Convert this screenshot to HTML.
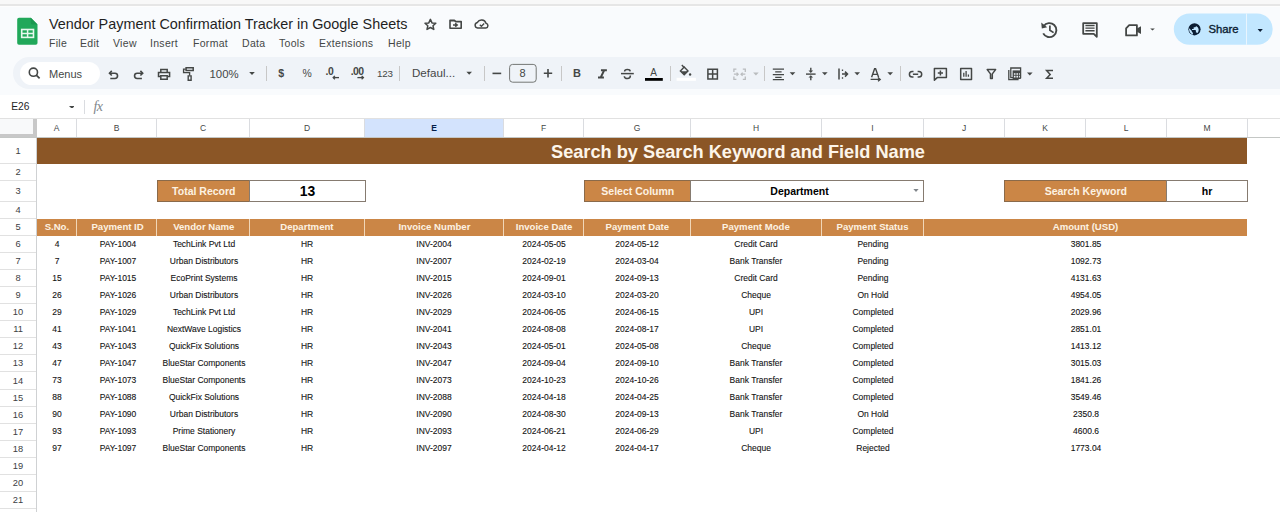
<!DOCTYPE html>
<html><head><meta charset="utf-8">
<style>
*{margin:0;padding:0;box-sizing:border-box}
html,body{width:1280px;height:512px;overflow:hidden;background:#fff;font-family:"Liberation Sans",sans-serif}
.a{position:absolute}
#top{position:absolute;left:0;top:0;width:1280px;height:118px;background:#f9fbfd}
#strip{position:absolute;left:0;top:0;width:1280px;height:6px;background:#f8f8f8;border-bottom:2px solid #e6e6e6}
#strip2{position:absolute;left:0;top:6px;width:1280px;height:1px;background:#fdfdfd}
.title{position:absolute;left:49px;top:16.3px;font-size:14.4px;color:#1f1f1f;white-space:nowrap;letter-spacing:0}
.menu{position:absolute;top:37.2px;font-size:10.5px;color:#444746;white-space:nowrap;letter-spacing:0.3px}
#tb{position:absolute;left:13px;top:57px;width:1300px;height:32px;background:#eff3f8;border-radius:16px}
#srch{position:absolute;left:20px;top:62px;width:80px;height:23px;background:#fff;border-radius:12px}
.ti{position:absolute;color:#444746;font-size:11px;white-space:nowrap}
.sep{position:absolute;top:65px;width:1px;height:17px;background:#c7c7c7}
#namebar{position:absolute;left:0;top:95px;width:1280px;height:23px;background:#fff}
.cell{position:absolute;white-space:nowrap;text-align:center;overflow:visible}
.colh{position:absolute;top:118px;height:20px;border-right:1px solid #e1e1e1;border-top:1px solid #e1e1e1;border-bottom:1px solid #c4c7c5;font-size:8.5px;color:#444746;text-align:center;line-height:19px;background:#fff}
.rowh{position:absolute;left:0;width:36px;border-bottom:1px solid #e1e1e1;border-right:1px solid #c4c7c5;font-size:8.5px;color:#444746;text-align:center;background:#fff}
.d{position:absolute;font-size:9.7px;color:#111;-webkit-text-stroke:0.12px #222;white-space:nowrap;transform:translateX(-50%) scaleX(0.875)}
.h{position:absolute;font-size:9.6px;color:#fdf2e2;font-weight:bold;white-space:nowrap;transform:translateX(-50%)}
</style></head><body>
<div id="top"></div>
<div id="strip"></div><div id="strip2"></div>

<!-- sheets logo -->
<svg class="a" style="left:0;top:0" width="50" height="50" viewBox="0 0 50 50">
  <path d="M19 17.8H30.8L37.5 24.5V43a1.8 1.8 0 0 1 -1.8 1.8H19a1.8 1.8 0 0 1 -1.8 -1.8V19.6a1.8 1.8 0 0 1 1.8 -1.8z" fill="#21a85a"/>
  <path d="M30.8 17.8L37.5 24.5H32.4a1.6 1.6 0 0 1 -1.6 -1.6z" fill="#1a9850"/>
  <rect x="21.7" y="29.5" width="11.8" height="7.9" fill="none" stroke="#e8f7ee" stroke-width="1.6"/>
  <path d="M21.7 33.45H33.5M27.6 29.5V37.4" stroke="#e8f7ee" stroke-width="1.5"/>
</svg>
<div class="title">Vendor Payment Confirmation Tracker in Google Sheets</div>
<div class="menu" style="left:49px">File</div>
<div class="menu" style="left:80px">Edit</div>
<div class="menu" style="left:113px">View</div>
<div class="menu" style="left:150px">Insert</div>
<div class="menu" style="left:193px">Format</div>
<div class="menu" style="left:242px">Data</div>
<div class="menu" style="left:279px">Tools</div>
<div class="menu" style="left:319px">Extensions</div>
<div class="menu" style="left:388px">Help</div>

<!-- title icons -->
<svg class="a" style="left:400px;top:0" width="100" height="50" viewBox="400 0 100 50">
<path d="M430.4 19.4L432.0 22.9L435.8 23.3L433.0 25.8L433.8 29.4L430.4 27.5L427.0 29.4L427.8 25.8L425.0 23.3L428.8 22.9Z" fill="none" stroke="#444746" stroke-width="1.5" stroke-linejoin="round"/>
<path d="M450 20.2H454.4L455.8 21.6H461.2V28.2H450Z" fill="none" stroke="#444746" stroke-width="1.6" stroke-linejoin="round"/>
<path d="M450 20.2H454.4L455.8 21.6H450Z" fill="#444746"/>
<path d="M453 24.9H456.6M455.2 23.2L457.2 24.9L455.2 26.6" fill="none" stroke="#444746" stroke-width="1.5"/>
<path d="M477.6 28.1A2.9 2.9 0 0 1 477.4 22.4A4.7 4.7 0 0 1 486 23.2A2.5 2.5 0 0 1 485.8 28.1Z" fill="none" stroke="#444746" stroke-width="1.5" stroke-linejoin="round"/>
<path d="M479.8 24.8L481.4 26.3L484.2 23.5" fill="none" stroke="#444746" stroke-width="1.3"/>
</svg>

<!-- right icons -->
<svg class="a" style="left:1000px;top:0" width="280" height="56" viewBox="1000 0 280 56">
<path d="M1043.6 26.2A7 7 0 1 1 1043.2 33.4" fill="none" stroke="#444746" stroke-width="1.9"/>
<path d="M1041.2 22.6L1041.8 28.4L1047.2 27.2Z" fill="#444746"/>
<path d="M1049.9 25.4V30.2L1053.6 32.6" fill="none" stroke="#444746" stroke-width="1.7"/>
<path d="M1083.2 23.2H1096.8V36.8L1093.8 33.8H1083.2Z" fill="none" stroke="#444746" stroke-width="1.8" stroke-linejoin="round"/>
<path d="M1085.4 25.5H1094.6M1085.4 28.1H1094.6M1085.4 30.7H1094.6" stroke="#444746" stroke-width="1.4"/>
<path d="M1129.2 25.1H1136.9V35.4H1126.1V28.3Z" fill="none" stroke="#444746" stroke-width="1.8" stroke-linejoin="round"/>
<path d="M1136.9 28.6L1141 26.3V34.1L1136.9 31.8Z" fill="#444746"/>
<path d="M1150.2 28.5h4.6l-2.3 1.9z" fill="#444746"/>
<rect x="1173.8" y="13.4" width="98.9" height="31.4" rx="15.7" fill="#c2e7ff"/>
<rect x="1246" y="13.4" width="1" height="31.4" fill="#e9f5fe"/>
<circle cx="1194.5" cy="29.3" r="6.1" fill="#0b1d33"/>
<path d="M1193.8 34.6c-2.6-.3-4.7-2.5-4.7-5.2 0-.4 0-.7.1-1.1l2.6 2.6v.6c0 .6.5 1.1 1.1 1.1v2zM1197.6 33.2c-.2-.5-.6-.8-1.1-.8h-.6v-1.7c0-.3-.3-.6-.6-.6h-3.3v-1.1h1.1c.3 0 .6-.3.6-.6v-1.1h1.1c.6 0 1.1-.5 1.1-1.1v-.2c1.6.6 2.8 2.2 2.8 4 0 1.1-.4 2.2-1.1 3z" fill="#c2e7ff"/>
<path d="M1257.6 28.9h5.2l-2.6 3z" fill="#0b1d33"/>
</svg>
<div class="a" style="left:1208.4px;top:23.2px;font-size:11.3px;color:#0b1d33;line-height:12px;letter-spacing:0px;-webkit-text-stroke:0.35px #0b1d33">Share</div>

<!-- toolbar -->
<div id="tb"></div>
<div id="srch"></div>
<svg class="a" style="left:0;top:0" width="1280" height="118" viewBox="0 0 1280 118"><circle cx="33.4" cy="72.2" r="4.1" fill="none" stroke="#444746" stroke-width="1.6"/><path d="M36.3 75.1L39.6 78.4" fill="none" stroke="#444746" stroke-width="1.7" /><path d="M109.6 73.2H114.9A2.65 2.65 0 0 1 114.9 78.5H110.3" fill="none" stroke="#444746" stroke-width="1.6" /><path d="M111.8 70.9L109.5 73.2L111.8 75.5" fill="none" stroke="#444746" stroke-width="1.6" stroke-linejoin="miter"/><path d="M142.6 73.2H137.2A2.65 2.65 0 0 0 137.2 78.5H141.9" fill="none" stroke="#444746" stroke-width="1.6" /><path d="M140.4 70.9L142.7 73.2L140.4 75.5" fill="none" stroke="#444746" stroke-width="1.6" /><path d="M160.8 72.5V69.5H167.2V72.5" fill="none" stroke="#444746" stroke-width="1.5" /><path d="M160.4 76.5H158.5V72.6H169.6V76.5H167.6" fill="none" stroke="#444746" stroke-width="1.5" /><path d="M160.8 75.8H167.2V79.2H160.8Z" fill="none" stroke="#444746" stroke-width="1.5" /><path d="M186.1 67.8H193.2V70.4H186.1Z" fill="none" stroke="#444746" stroke-width="1.5" /><path d="M185.9 69.1H183.6V72.6H189.6V75.6" fill="none" stroke="#444746" stroke-width="1.4" /><path d="M188.2 75.9H191.1V80.2H188.2Z" fill="none" stroke="#444746" stroke-width="1.4" /><path d="M249.2 72h5.6l-2.8 3z" fill="#444746"/><rect x="266" y="66" width="1" height="15" fill="#c7c7c7"/><path d="M333.2 77.6H339" fill="none" stroke="#444746" stroke-width="1.3" /><path d="M334.9 75.9L333.2 77.6L334.9 79.3" fill="none" stroke="#444746" stroke-width="1.3" /><path d="M357.4 77.6H363.4" fill="none" stroke="#444746" stroke-width="1.3" /><path d="M361.6 75.9L363.4 77.6L361.6 79.3" fill="none" stroke="#444746" stroke-width="1.3" /><rect x="399" y="66" width="1" height="15" fill="#c7c7c7"/><path d="M466.4 71.8h5.6l-2.8 3z" fill="#444746"/><rect x="484" y="66" width="1" height="15" fill="#c7c7c7"/><path d="M492.5 73.4H501.2" fill="none" stroke="#444746" stroke-width="1.6" /><rect x="509.6" y="64.4" width="26.6" height="17.8" rx="3" fill="none" stroke="#747775" stroke-width="1"/><path d="M543.8 73.3H552.2M548 69.1V77.5" fill="none" stroke="#444746" stroke-width="1.6" /><rect x="561" y="66" width="1" height="15" fill="#c7c7c7"/><path transform="translate(598 69.2) scale(0.74 0.668) translate(-6 -4)" d="M10 4v3h2.21l-3.42 8H6v3h8v-3h-2.21l3.42-8H18V4z" fill="#444746"/><path d="M621 73.6H633.8" fill="none" stroke="#444746" stroke-width="1.5" /><path d="M630.2 71.3C630 69.8 628.6 69.6 627.4 69.6C625.6 69.6 624.6 70.4 624.6 71.6" fill="none" stroke="#444746" stroke-width="1.5" /><path d="M630.4 75.6C630.4 77.6 628.8 78.6 627.4 78.6C625.9 78.6 624.4 77.8 624.3 76.2" fill="none" stroke="#444746" stroke-width="1.5" /><rect x="645" y="78" width="17.8" height="2.8" fill="#000"/><rect x="670" y="66" width="1" height="15" fill="#c7c7c7"/><path d="M680.2 70.9L684.2 66.9L688.1 70.9L684.2 74.8Z" fill="none"/><path d="M680.4 70.9L684.2 67.1L688.0 70.9L684.2 74.7Z" fill="none" stroke="#444746" stroke-width="1.4" /><path d="M680.9 71.3H687.5L684.2 74.6Z" fill="#444746"/><path d="M681.8 65.1L683.9 67.3" fill="none" stroke="#444746" stroke-width="1.4" /><circle cx="690.1" cy="74.5" r="1.2" fill="#444746"/><rect x="676.6" y="77.8" width="19.3" height="3" fill="#fff"/><path d="M707.9 69.2H717.4V78.9H707.9ZM712.65 69.2V78.9M707.9 74.05H717.4" fill="none" stroke="#444746" stroke-width="1.5" /><path d="M736.4 69.1H733.9V72M736.4 79.3H733.9V76.4M742.8 69.1H745.3V72M742.8 79.3H745.3V76.4" fill="none" stroke="#b9bcbe" stroke-width="1.3" /><path d="M733.9 74.2H738.2M736.6 72.6L738.2 74.2L736.6 75.8M745.3 74.2H741M742.6 72.6L741 74.2L742.6 75.8" fill="none" stroke="#b9bcbe" stroke-width="1.2" /><path d="M753.1 72.4h5.6l-2.8 3z" fill="#b9bcbe"/><rect x="764" y="66" width="1" height="15" fill="#c7c7c7"/><path d="M772.8 69.2H784M775.2 71.9H781.6M772.8 74.6H784M775.2 77.3H781.6M772.8 79.7H784" fill="none" stroke="#444746" stroke-width="1.3" /><path d="M789.7 72.2h5.6l-2.8 3z" fill="#444746"/><path d="M806 74.1H815.6" fill="none" stroke="#444746" stroke-width="1.4" /><path d="M810.8 73L808.5 70.6H810.1V67.8H811.5V70.6H813.1Z" fill="#444746"/><path d="M810.8 75.2L808.5 77.6H810.1V80.2H811.5V77.6H813.1Z" fill="#444746"/><path d="M822 72.2h5.6l-2.8 3z" fill="#444746"/><path d="M839 68.6V79.6" fill="none" stroke="#444746" stroke-width="1.5" /><path d="M842 74.1H847.2M845 71.6L847.5 74.1L845 76.6" fill="none" stroke="#444746" stroke-width="1.5" /><path d="M842.5 69.5V71M842.5 77.2V78.8" fill="none" stroke="#444746" stroke-width="1.3" /><path d="M854.4 72.2h5.6l-2.8 3z" fill="#444746"/><path d="M871.6 77.2L874.6 68.8H875.6L878.6 77.2M872.7 74.4H877.5" fill="none" stroke="#444746" stroke-width="1.4" /><path d="M870.6 79.4H880M878 77.6L880.2 79.4L878 81.2" fill="none" stroke="#444746" stroke-width="1.3" /><path d="M887.4 72.2h5.6l-2.8 3z" fill="#444746"/><rect x="900" y="66" width="1" height="15" fill="#c7c7c7"/><path d="M913.5 71.4H912.2A2.8 2.8 0 0 0 912.2 77H913.5M917.6 71.4H918.9A2.8 2.8 0 0 1 918.9 77H917.6M912.9 74.2H918.2" fill="none" stroke="#444746" stroke-width="1.5" /><path d="M934.4 68.5H946.4V77.6H937.2L934.4 80.2Z" fill="none" stroke="#444746" stroke-width="1.5" stroke-linejoin="round"/><path d="M940.4 70.4V75.6M937.8 73H943" fill="none" stroke="#444746" stroke-width="1.5" /><path d="M960.7 68.6H971.5V79.4H960.7Z" fill="none" stroke="#444746" stroke-width="1.5" stroke-linejoin="round"/><path d="M963.8 72.8V76.8M966.1 71V76.8M968.4 74.6V76.8" fill="none" stroke="#444746" stroke-width="1.3" /><path d="M987.2 69.6H995.6L992.3 73.9V78.4H990.5V73.9Z" fill="none" stroke="#444746" stroke-width="1.5" stroke-linejoin="round"/><path d="M1008.8 70V79.6H1018.6" fill="none" stroke="#444746" stroke-width="1.3" /><path d="M1010.8 68V77.6H1020.6V68Z" fill="none" stroke="#444746" stroke-width="1.3" /><rect x="1012.6" y="70.4" width="8.2" height="8.6" fill="#444746"/><path d="M1013.9 73.2h1.6v1.6h-1.6zM1016.4 73.2h1.6v1.6h-1.6zM1018.9 73.2h1.0v1.6h-1.0zM1013.9 75.8h1.6v1.6h-1.6zM1016.4 75.8h1.6v1.6h-1.6zM1018.9 75.8h1.0v1.6h-1.0z" fill="#eff3f8"/><path d="M1027 72.6h5.6l-2.8 3z" fill="#444746"/><path d="M1053 70.5H1046.6L1050.2 74.4L1046.6 78.3H1053" fill="none" stroke="#444746" stroke-width="1.5" stroke-linejoin="miter"/></svg><div class="a" style="left:49px;top:67.6px;font-size:11px;color:#444746;white-space:nowrap;line-height:12px">Menus</div><div class="a" style="left:209.5px;top:67.8px;font-size:11.4px;color:#444746;white-space:nowrap;line-height:12px">100%</div><div class="a" style="left:278.2px;top:67.4px;font-size:10.6px;color:#444746;font-weight:bold;white-space:nowrap;line-height:12px">$</div><div class="a" style="left:302.5px;top:67.8px;font-size:10.4px;color:#444746;white-space:nowrap;line-height:12px">%</div><div class="a" style="left:325.5px;top:66.2px;font-size:10.4px;color:#444746;font-weight:bold;letter-spacing:-0.3px;white-space:nowrap;line-height:12px">.0</div><div class="a" style="left:350.8px;top:66.2px;font-size:10.4px;color:#444746;font-weight:bold;letter-spacing:-0.6px;white-space:nowrap;line-height:12px">.00</div><div class="a" style="left:377px;top:67.6px;font-size:9.8px;color:#444746;letter-spacing:-0.2px;white-space:nowrap;line-height:12px">123</div><div class="a" style="left:412px;top:67px;font-size:11.6px;color:#444746;white-space:nowrap;line-height:12px">Defaul...</div><div class="a" style="left:519.5px;top:67px;font-size:11px;color:#444746;white-space:nowrap;line-height:12px">8</div><div class="a" style="left:573px;top:66.5px;font-size:11px;color:#444746;font-weight:bold;white-space:nowrap;line-height:12px">B</div><div class="a" style="left:650.2px;top:66.6px;font-size:10px;color:#444746;white-space:nowrap;line-height:12px">A</div>

<!-- name box row -->
<div id="namebar"></div>
<div class="a" style="left:11.2px;top:100.6px;font-size:10.2px;color:#1f1f1f">E26</div>
<svg class="a" style="left:68.6px;top:105.6px" width="5.8" height="2.8" viewBox="0 0 7 4" preserveAspectRatio="none"><path d="M0 0h7L3.5 4z" fill="#444746"/></svg>
<div class="a" style="left:84px;top:100px;width:1px;height:14px;background:#dadce0"></div>
<div class="a" style="left:93.5px;top:98.6px;font-size:14px;line-height:16px;color:#80868b;font-style:italic;font-family:'Liberation Serif',serif;letter-spacing:-0.6px">fx</div>

<div class="a" style="left:0;top:118px;width:1280px;height:1px;background:#e1e1e1"></div>
<div class="a" style="left:0;top:119px;width:36px;height:19px;background:#f8f9fa"></div>
<div class="a" style="left:0;top:134px;width:37px;height:4px;background:#c8c8c8"></div>
<div class="a" style="left:33px;top:119px;width:4px;height:19px;background:#c8c8c8"></div>
<div class="a" style="left:37px;top:119px;width:39px;height:19px;background:#fff;color:#444746;font-size:8.5px;text-align:center;line-height:19px">A</div>
<div class="a" style="left:76px;top:119px;width:1px;height:19px;background:#dadce0"></div>
<div class="a" style="left:77px;top:119px;width:79px;height:19px;background:#fff;color:#444746;font-size:8.5px;text-align:center;line-height:19px">B</div>
<div class="a" style="left:156px;top:119px;width:1px;height:19px;background:#dadce0"></div>
<div class="a" style="left:157px;top:119px;width:92px;height:19px;background:#fff;color:#444746;font-size:8.5px;text-align:center;line-height:19px">C</div>
<div class="a" style="left:249px;top:119px;width:1px;height:19px;background:#dadce0"></div>
<div class="a" style="left:250px;top:119px;width:114px;height:19px;background:#fff;color:#444746;font-size:8.5px;text-align:center;line-height:19px">D</div>
<div class="a" style="left:364px;top:119px;width:1px;height:19px;background:#dadce0"></div>
<div class="a" style="left:365px;top:119px;width:138px;height:19px;background:#d3e3fd;color:#041e49;font-weight:bold;font-size:8.5px;text-align:center;line-height:19px">E</div>
<div class="a" style="left:503px;top:119px;width:1px;height:19px;background:#dadce0"></div>
<div class="a" style="left:504px;top:119px;width:79px;height:19px;background:#fff;color:#444746;font-size:8.5px;text-align:center;line-height:19px">F</div>
<div class="a" style="left:583px;top:119px;width:1px;height:19px;background:#dadce0"></div>
<div class="a" style="left:584px;top:119px;width:106px;height:19px;background:#fff;color:#444746;font-size:8.5px;text-align:center;line-height:19px">G</div>
<div class="a" style="left:690px;top:119px;width:1px;height:19px;background:#dadce0"></div>
<div class="a" style="left:691px;top:119px;width:130px;height:19px;background:#fff;color:#444746;font-size:8.5px;text-align:center;line-height:19px">H</div>
<div class="a" style="left:821px;top:119px;width:1px;height:19px;background:#dadce0"></div>
<div class="a" style="left:822px;top:119px;width:101px;height:19px;background:#fff;color:#444746;font-size:8.5px;text-align:center;line-height:19px">I</div>
<div class="a" style="left:923px;top:119px;width:1px;height:19px;background:#dadce0"></div>
<div class="a" style="left:924px;top:119px;width:80px;height:19px;background:#fff;color:#444746;font-size:8.5px;text-align:center;line-height:19px">J</div>
<div class="a" style="left:1004px;top:119px;width:1px;height:19px;background:#dadce0"></div>
<div class="a" style="left:1005px;top:119px;width:80px;height:19px;background:#fff;color:#444746;font-size:8.5px;text-align:center;line-height:19px">K</div>
<div class="a" style="left:1085px;top:119px;width:1px;height:19px;background:#dadce0"></div>
<div class="a" style="left:1086px;top:119px;width:80px;height:19px;background:#fff;color:#444746;font-size:8.5px;text-align:center;line-height:19px">L</div>
<div class="a" style="left:1166px;top:119px;width:1px;height:19px;background:#dadce0"></div>
<div class="a" style="left:1167px;top:119px;width:80px;height:19px;background:#fff;color:#444746;font-size:8.5px;text-align:center;line-height:19px">M</div>
<div class="a" style="left:1247px;top:119px;width:1px;height:19px;background:#dadce0"></div>
<div class="a" style="left:0;top:137px;width:1280px;height:1px;background:#c4c7c5"></div>
<div class="a" style="left:36px;top:138px;width:1px;height:400px;background:#cfd1d3"></div>
<div class="a" style="left:0;top:138px;width:36px;height:26px;font-size:9.3px;color:#3c4043;text-align:center;line-height:26px">1</div>
<div class="a" style="left:0;top:163px;width:36px;height:1px;background:#e1e1e1"></div>
<div class="a" style="left:0;top:164px;width:36px;height:17px;font-size:9.3px;color:#3c4043;text-align:center;line-height:17px">2</div>
<div class="a" style="left:0;top:180px;width:36px;height:1px;background:#e1e1e1"></div>
<div class="a" style="left:0;top:181px;width:36px;height:21px;font-size:9.3px;color:#3c4043;text-align:center;line-height:21px">3</div>
<div class="a" style="left:0;top:201px;width:36px;height:1px;background:#e1e1e1"></div>
<div class="a" style="left:0;top:202px;width:36px;height:17px;font-size:9.3px;color:#3c4043;text-align:center;line-height:17px">4</div>
<div class="a" style="left:0;top:218px;width:36px;height:1px;background:#e1e1e1"></div>
<div class="a" style="left:0;top:219px;width:36px;height:17px;font-size:9.3px;color:#3c4043;text-align:center;line-height:17px">5</div>
<div class="a" style="left:0;top:235px;width:36px;height:1px;background:#e1e1e1"></div>
<div class="a" style="left:0;top:236px;width:36px;height:17px;font-size:9.3px;color:#3c4043;text-align:center;line-height:17px">6</div>
<div class="a" style="left:0;top:252px;width:36px;height:1px;background:#e1e1e1"></div>
<div class="a" style="left:0;top:253px;width:36px;height:17px;font-size:9.3px;color:#3c4043;text-align:center;line-height:17px">7</div>
<div class="a" style="left:0;top:269px;width:36px;height:1px;background:#e1e1e1"></div>
<div class="a" style="left:0;top:270px;width:36px;height:17px;font-size:9.3px;color:#3c4043;text-align:center;line-height:17px">8</div>
<div class="a" style="left:0;top:286px;width:36px;height:1px;background:#e1e1e1"></div>
<div class="a" style="left:0;top:287px;width:36px;height:17px;font-size:9.3px;color:#3c4043;text-align:center;line-height:17px">9</div>
<div class="a" style="left:0;top:303px;width:36px;height:1px;background:#e1e1e1"></div>
<div class="a" style="left:0;top:304px;width:36px;height:17px;font-size:9.3px;color:#3c4043;text-align:center;line-height:17px">10</div>
<div class="a" style="left:0;top:320px;width:36px;height:1px;background:#e1e1e1"></div>
<div class="a" style="left:0;top:321px;width:36px;height:17px;font-size:9.3px;color:#3c4043;text-align:center;line-height:17px">11</div>
<div class="a" style="left:0;top:337px;width:36px;height:1px;background:#e1e1e1"></div>
<div class="a" style="left:0;top:338px;width:36px;height:17px;font-size:9.3px;color:#3c4043;text-align:center;line-height:17px">12</div>
<div class="a" style="left:0;top:354px;width:36px;height:1px;background:#e1e1e1"></div>
<div class="a" style="left:0;top:355px;width:36px;height:17px;font-size:9.3px;color:#3c4043;text-align:center;line-height:17px">13</div>
<div class="a" style="left:0;top:371px;width:36px;height:1px;background:#e1e1e1"></div>
<div class="a" style="left:0;top:372px;width:36px;height:18px;font-size:9.3px;color:#3c4043;text-align:center;line-height:18px">14</div>
<div class="a" style="left:0;top:389px;width:36px;height:1px;background:#e1e1e1"></div>
<div class="a" style="left:0;top:390px;width:36px;height:17px;font-size:9.3px;color:#3c4043;text-align:center;line-height:17px">15</div>
<div class="a" style="left:0;top:406px;width:36px;height:1px;background:#e1e1e1"></div>
<div class="a" style="left:0;top:407px;width:36px;height:17px;font-size:9.3px;color:#3c4043;text-align:center;line-height:17px">16</div>
<div class="a" style="left:0;top:423px;width:36px;height:1px;background:#e1e1e1"></div>
<div class="a" style="left:0;top:424px;width:36px;height:17px;font-size:9.3px;color:#3c4043;text-align:center;line-height:17px">17</div>
<div class="a" style="left:0;top:440px;width:36px;height:1px;background:#e1e1e1"></div>
<div class="a" style="left:0;top:441px;width:36px;height:17px;font-size:9.3px;color:#3c4043;text-align:center;line-height:17px">18</div>
<div class="a" style="left:0;top:457px;width:36px;height:1px;background:#e1e1e1"></div>
<div class="a" style="left:0;top:458px;width:36px;height:17px;font-size:9.3px;color:#3c4043;text-align:center;line-height:17px">19</div>
<div class="a" style="left:0;top:474px;width:36px;height:1px;background:#e1e1e1"></div>
<div class="a" style="left:0;top:475px;width:36px;height:17px;font-size:9.3px;color:#3c4043;text-align:center;line-height:17px">20</div>
<div class="a" style="left:0;top:491px;width:36px;height:1px;background:#e1e1e1"></div>
<div class="a" style="left:0;top:492px;width:36px;height:17px;font-size:9.3px;color:#3c4043;text-align:center;line-height:17px">21</div>
<div class="a" style="left:0;top:508px;width:36px;height:1px;background:#e1e1e1"></div>
<div class="a" style="left:37px;top:138px;width:1210px;height:26px;background:#8b5626"></div>
<div class="a" style="left:551px;top:142px;font-size:18.2px;font-weight:bold;color:#fdf5ea;white-space:nowrap;line-height:20px">Search by Search Keyword and Field Name</div>
<div class="a" style="left:157px;top:180px;width:92px;height:22px;background:#cb8646;border:1px solid #8a6a4a;border-right:none"></div>
<div class="a" style="left:249px;top:180px;width:117px;height:22px;background:#fff;border:1px solid #867b70"></div>
<div class="h" style="left:203.8px;top:185px;font-size:10.5px;line-height:12px">Total Record</div>
<div class="a" style="left:307.5px;top:180px;height:22px;transform:translateX(-50%);white-space:nowrap;font-size:13.9px;font-weight:bold;color:#000;line-height:22px">13</div>
<div class="a" style="left:584px;top:180px;width:106px;height:22px;background:#cb8646;border:1px solid #8a6a4a;border-right:none"></div>
<div class="a" style="left:690px;top:180px;width:234px;height:22px;background:#fff;border:1px solid #867b70"></div>
<div class="h" style="left:637.8px;top:185px;font-size:10.5px;line-height:12px">Select Column</div>
<div class="a" style="left:807.0px;top:180px;height:22px;transform:translateX(-50%);white-space:nowrap;font-size:10.5px;font-weight:bold;color:#000;line-height:22px"><span style="position:relative;left:-7.5px">Department</span></div>
<svg class="a" style="left:913px;top:189px" width="6" height="3" viewBox="0 0 7 4"><path d="M0 0h7L3.5 4z" fill="#80868b"/></svg>
<div class="a" style="left:1004px;top:180px;width:162px;height:22px;background:#cb8646;border:1px solid #8a6a4a;border-right:none"></div>
<div class="a" style="left:1166px;top:180px;width:82px;height:22px;background:#fff;border:1px solid #867b70"></div>
<div class="h" style="left:1085.8px;top:185px;font-size:10.5px;line-height:12px">Search Keyword</div>
<div class="a" style="left:1207.0px;top:180px;height:22px;transform:translateX(-50%);white-space:nowrap;font-size:10.5px;font-weight:bold;color:#000;line-height:22px">hr</div>
<div class="a" style="left:37px;top:219px;width:1210px;height:17px;background:#cb8646"></div>
<div class="h" style="left:56.9px;top:221px;line-height:12px">S.No.</div>
<div class="a" style="left:76px;top:219px;width:1px;height:17px;background:#f1d7b8"></div>
<div class="h" style="left:117.6px;top:221px;line-height:12px">Payment ID</div>
<div class="a" style="left:156px;top:219px;width:1px;height:17px;background:#f1d7b8"></div>
<div class="h" style="left:203.8px;top:221px;line-height:12px">Vendor Name</div>
<div class="a" style="left:249px;top:219px;width:1px;height:17px;background:#f1d7b8"></div>
<div class="h" style="left:306.9px;top:221px;line-height:12px">Department</div>
<div class="a" style="left:364px;top:219px;width:1px;height:17px;background:#f1d7b8"></div>
<div class="h" style="left:434.4px;top:221px;line-height:12px">Invoice Number</div>
<div class="a" style="left:503px;top:219px;width:1px;height:17px;background:#f1d7b8"></div>
<div class="h" style="left:544.0px;top:221px;line-height:12px">Invoice Date</div>
<div class="a" style="left:583px;top:219px;width:1px;height:17px;background:#f1d7b8"></div>
<div class="h" style="left:637.3px;top:221px;line-height:12px">Payment Date</div>
<div class="a" style="left:690px;top:219px;width:1px;height:17px;background:#f1d7b8"></div>
<div class="h" style="left:755.9px;top:221px;line-height:12px">Payment Mode</div>
<div class="a" style="left:821px;top:219px;width:1px;height:17px;background:#f1d7b8"></div>
<div class="h" style="left:872.5px;top:221px;line-height:12px">Payment Status</div>
<div class="a" style="left:923px;top:219px;width:1px;height:17px;background:#f1d7b8"></div>
<div class="h" style="left:1085.5px;top:221px;line-height:12px">Amount (USD)</div>
<div class="d" style="left:56.9px;top:238.4px;line-height:11px">4</div>
<div class="d" style="left:117.6px;top:238.4px;line-height:11px">PAY-1004</div>
<div class="d" style="left:203.8px;top:238.4px;line-height:11px">TechLink Pvt Ltd</div>
<div class="d" style="left:306.9px;top:238.4px;line-height:11px">HR</div>
<div class="d" style="left:434.4px;top:238.4px;line-height:11px">INV-2004</div>
<div class="d" style="left:544.0px;top:238.4px;line-height:11px">2024-05-05</div>
<div class="d" style="left:637.3px;top:238.4px;line-height:11px">2024-05-12</div>
<div class="d" style="left:755.9px;top:238.4px;line-height:11px">Credit Card</div>
<div class="d" style="left:872.5px;top:238.4px;line-height:11px">Pending</div>
<div class="d" style="left:1085.5px;top:238.4px;line-height:11px">3801.85</div>
<div class="d" style="left:56.9px;top:255.4px;line-height:11px">7</div>
<div class="d" style="left:117.6px;top:255.4px;line-height:11px">PAY-1007</div>
<div class="d" style="left:203.8px;top:255.4px;line-height:11px">Urban Distributors</div>
<div class="d" style="left:306.9px;top:255.4px;line-height:11px">HR</div>
<div class="d" style="left:434.4px;top:255.4px;line-height:11px">INV-2007</div>
<div class="d" style="left:544.0px;top:255.4px;line-height:11px">2024-02-19</div>
<div class="d" style="left:637.3px;top:255.4px;line-height:11px">2024-03-04</div>
<div class="d" style="left:755.9px;top:255.4px;line-height:11px">Bank Transfer</div>
<div class="d" style="left:872.5px;top:255.4px;line-height:11px">Pending</div>
<div class="d" style="left:1085.5px;top:255.4px;line-height:11px">1092.73</div>
<div class="d" style="left:56.9px;top:272.4px;line-height:11px">15</div>
<div class="d" style="left:117.6px;top:272.4px;line-height:11px">PAY-1015</div>
<div class="d" style="left:203.8px;top:272.4px;line-height:11px">EcoPrint Systems</div>
<div class="d" style="left:306.9px;top:272.4px;line-height:11px">HR</div>
<div class="d" style="left:434.4px;top:272.4px;line-height:11px">INV-2015</div>
<div class="d" style="left:544.0px;top:272.4px;line-height:11px">2024-09-01</div>
<div class="d" style="left:637.3px;top:272.4px;line-height:11px">2024-09-13</div>
<div class="d" style="left:755.9px;top:272.4px;line-height:11px">Credit Card</div>
<div class="d" style="left:872.5px;top:272.4px;line-height:11px">Pending</div>
<div class="d" style="left:1085.5px;top:272.4px;line-height:11px">4131.63</div>
<div class="d" style="left:56.9px;top:289.4px;line-height:11px">26</div>
<div class="d" style="left:117.6px;top:289.4px;line-height:11px">PAY-1026</div>
<div class="d" style="left:203.8px;top:289.4px;line-height:11px">Urban Distributors</div>
<div class="d" style="left:306.9px;top:289.4px;line-height:11px">HR</div>
<div class="d" style="left:434.4px;top:289.4px;line-height:11px">INV-2026</div>
<div class="d" style="left:544.0px;top:289.4px;line-height:11px">2024-03-10</div>
<div class="d" style="left:637.3px;top:289.4px;line-height:11px">2024-03-20</div>
<div class="d" style="left:755.9px;top:289.4px;line-height:11px">Cheque</div>
<div class="d" style="left:872.5px;top:289.4px;line-height:11px">On Hold</div>
<div class="d" style="left:1085.5px;top:289.4px;line-height:11px">4954.05</div>
<div class="d" style="left:56.9px;top:306.4px;line-height:11px">29</div>
<div class="d" style="left:117.6px;top:306.4px;line-height:11px">PAY-1029</div>
<div class="d" style="left:203.8px;top:306.4px;line-height:11px">TechLink Pvt Ltd</div>
<div class="d" style="left:306.9px;top:306.4px;line-height:11px">HR</div>
<div class="d" style="left:434.4px;top:306.4px;line-height:11px">INV-2029</div>
<div class="d" style="left:544.0px;top:306.4px;line-height:11px">2024-06-05</div>
<div class="d" style="left:637.3px;top:306.4px;line-height:11px">2024-06-15</div>
<div class="d" style="left:755.9px;top:306.4px;line-height:11px">UPI</div>
<div class="d" style="left:872.5px;top:306.4px;line-height:11px">Completed</div>
<div class="d" style="left:1085.5px;top:306.4px;line-height:11px">2029.96</div>
<div class="d" style="left:56.9px;top:323.4px;line-height:11px">41</div>
<div class="d" style="left:117.6px;top:323.4px;line-height:11px">PAY-1041</div>
<div class="d" style="left:203.8px;top:323.4px;line-height:11px">NextWave Logistics</div>
<div class="d" style="left:306.9px;top:323.4px;line-height:11px">HR</div>
<div class="d" style="left:434.4px;top:323.4px;line-height:11px">INV-2041</div>
<div class="d" style="left:544.0px;top:323.4px;line-height:11px">2024-08-08</div>
<div class="d" style="left:637.3px;top:323.4px;line-height:11px">2024-08-17</div>
<div class="d" style="left:755.9px;top:323.4px;line-height:11px">UPI</div>
<div class="d" style="left:872.5px;top:323.4px;line-height:11px">Completed</div>
<div class="d" style="left:1085.5px;top:323.4px;line-height:11px">2851.01</div>
<div class="d" style="left:56.9px;top:340.4px;line-height:11px">43</div>
<div class="d" style="left:117.6px;top:340.4px;line-height:11px">PAY-1043</div>
<div class="d" style="left:203.8px;top:340.4px;line-height:11px">QuickFix Solutions</div>
<div class="d" style="left:306.9px;top:340.4px;line-height:11px">HR</div>
<div class="d" style="left:434.4px;top:340.4px;line-height:11px">INV-2043</div>
<div class="d" style="left:544.0px;top:340.4px;line-height:11px">2024-05-01</div>
<div class="d" style="left:637.3px;top:340.4px;line-height:11px">2024-05-08</div>
<div class="d" style="left:755.9px;top:340.4px;line-height:11px">Cheque</div>
<div class="d" style="left:872.5px;top:340.4px;line-height:11px">Completed</div>
<div class="d" style="left:1085.5px;top:340.4px;line-height:11px">1413.12</div>
<div class="d" style="left:56.9px;top:357.4px;line-height:11px">47</div>
<div class="d" style="left:117.6px;top:357.4px;line-height:11px">PAY-1047</div>
<div class="d" style="left:203.8px;top:357.4px;line-height:11px">BlueStar Components</div>
<div class="d" style="left:306.9px;top:357.4px;line-height:11px">HR</div>
<div class="d" style="left:434.4px;top:357.4px;line-height:11px">INV-2047</div>
<div class="d" style="left:544.0px;top:357.4px;line-height:11px">2024-09-04</div>
<div class="d" style="left:637.3px;top:357.4px;line-height:11px">2024-09-10</div>
<div class="d" style="left:755.9px;top:357.4px;line-height:11px">Bank Transfer</div>
<div class="d" style="left:872.5px;top:357.4px;line-height:11px">Completed</div>
<div class="d" style="left:1085.5px;top:357.4px;line-height:11px">3015.03</div>
<div class="d" style="left:56.9px;top:374.4px;line-height:11px">73</div>
<div class="d" style="left:117.6px;top:374.4px;line-height:11px">PAY-1073</div>
<div class="d" style="left:203.8px;top:374.4px;line-height:11px">BlueStar Components</div>
<div class="d" style="left:306.9px;top:374.4px;line-height:11px">HR</div>
<div class="d" style="left:434.4px;top:374.4px;line-height:11px">INV-2073</div>
<div class="d" style="left:544.0px;top:374.4px;line-height:11px">2024-10-23</div>
<div class="d" style="left:637.3px;top:374.4px;line-height:11px">2024-10-26</div>
<div class="d" style="left:755.9px;top:374.4px;line-height:11px">Bank Transfer</div>
<div class="d" style="left:872.5px;top:374.4px;line-height:11px">Completed</div>
<div class="d" style="left:1085.5px;top:374.4px;line-height:11px">1841.26</div>
<div class="d" style="left:56.9px;top:391.4px;line-height:11px">88</div>
<div class="d" style="left:117.6px;top:391.4px;line-height:11px">PAY-1088</div>
<div class="d" style="left:203.8px;top:391.4px;line-height:11px">QuickFix Solutions</div>
<div class="d" style="left:306.9px;top:391.4px;line-height:11px">HR</div>
<div class="d" style="left:434.4px;top:391.4px;line-height:11px">INV-2088</div>
<div class="d" style="left:544.0px;top:391.4px;line-height:11px">2024-04-18</div>
<div class="d" style="left:637.3px;top:391.4px;line-height:11px">2024-04-25</div>
<div class="d" style="left:755.9px;top:391.4px;line-height:11px">Bank Transfer</div>
<div class="d" style="left:872.5px;top:391.4px;line-height:11px">Completed</div>
<div class="d" style="left:1085.5px;top:391.4px;line-height:11px">3549.46</div>
<div class="d" style="left:56.9px;top:408.4px;line-height:11px">90</div>
<div class="d" style="left:117.6px;top:408.4px;line-height:11px">PAY-1090</div>
<div class="d" style="left:203.8px;top:408.4px;line-height:11px">Urban Distributors</div>
<div class="d" style="left:306.9px;top:408.4px;line-height:11px">HR</div>
<div class="d" style="left:434.4px;top:408.4px;line-height:11px">INV-2090</div>
<div class="d" style="left:544.0px;top:408.4px;line-height:11px">2024-08-30</div>
<div class="d" style="left:637.3px;top:408.4px;line-height:11px">2024-09-13</div>
<div class="d" style="left:755.9px;top:408.4px;line-height:11px">Bank Transfer</div>
<div class="d" style="left:872.5px;top:408.4px;line-height:11px">On Hold</div>
<div class="d" style="left:1085.5px;top:408.4px;line-height:11px">2350.8</div>
<div class="d" style="left:56.9px;top:425.4px;line-height:11px">93</div>
<div class="d" style="left:117.6px;top:425.4px;line-height:11px">PAY-1093</div>
<div class="d" style="left:203.8px;top:425.4px;line-height:11px">Prime Stationery</div>
<div class="d" style="left:306.9px;top:425.4px;line-height:11px">HR</div>
<div class="d" style="left:434.4px;top:425.4px;line-height:11px">INV-2093</div>
<div class="d" style="left:544.0px;top:425.4px;line-height:11px">2024-06-21</div>
<div class="d" style="left:637.3px;top:425.4px;line-height:11px">2024-06-29</div>
<div class="d" style="left:755.9px;top:425.4px;line-height:11px">UPI</div>
<div class="d" style="left:872.5px;top:425.4px;line-height:11px">Completed</div>
<div class="d" style="left:1085.5px;top:425.4px;line-height:11px">4600.6</div>
<div class="d" style="left:56.9px;top:442.4px;line-height:11px">97</div>
<div class="d" style="left:117.6px;top:442.4px;line-height:11px">PAY-1097</div>
<div class="d" style="left:203.8px;top:442.4px;line-height:11px">BlueStar Components</div>
<div class="d" style="left:306.9px;top:442.4px;line-height:11px">HR</div>
<div class="d" style="left:434.4px;top:442.4px;line-height:11px">INV-2097</div>
<div class="d" style="left:544.0px;top:442.4px;line-height:11px">2024-04-12</div>
<div class="d" style="left:637.3px;top:442.4px;line-height:11px">2024-04-17</div>
<div class="d" style="left:755.9px;top:442.4px;line-height:11px">Cheque</div>
<div class="d" style="left:872.5px;top:442.4px;line-height:11px">Rejected</div>
<div class="d" style="left:1085.5px;top:442.4px;line-height:11px">1773.04</div>
</body></html>
